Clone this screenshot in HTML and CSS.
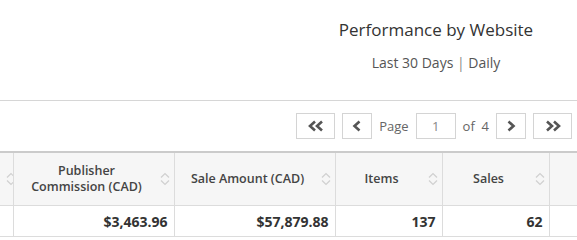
FILE: index.html
```html
<!DOCTYPE html>
<html lang="en">
<head>
  <meta charset="UTF-8">
  <meta name="viewport" content="width=device-width, initial-scale=1">
  <title>Performance by Website</title>
  <link rel="stylesheet" href="styles.css">
</head>
<body>

  <!-- Report title -->
  <div class="report-head">
    <div></div>
    <div class="report-title">
      <h2>Performance by Website</h2>
      <p>Last 30 Days <span class="sep">|</span> Daily</p>
    </div>
  </div>

  <!-- Pager -->
  <div class="pager">
    <button class="pg-btn wide" title="First">
      <svg width="18" height="12" viewBox="0 0 18 12"><polyline points="8,1.5 3,6 8,10.5"/><polyline points="15,1.5 10,6 15,10.5"/></svg>
    </button>
    <button class="pg-btn" title="Previous">
      <svg width="10" height="12" viewBox="0 0 10 12"><polyline points="7.5,1.5 2.5,6 7.5,10.5"/></svg>
    </button>
    <span class="pg-label">Page</span>
    <input class="pg-input" type="text" value="1">
    <span class="pg-label">of&nbsp; 4</span>
    <button class="pg-btn" title="Next">
      <svg width="10" height="12" viewBox="0 0 10 12"><polyline points="2.5,1.5 7.5,6 2.5,10.5"/></svg>
    </button>
    <button class="pg-btn wide" title="Last">
      <svg width="18" height="12" viewBox="0 0 18 12"><polyline points="3,1.5 8,6 3,10.5"/><polyline points="10,1.5 15,6 10,10.5"/></svg>
    </button>
  </div>

  <!-- Report table -->
  <div class="table-wrap">
    <table class="report">
      <colgroup>
        <col style="width:13px">
        <col style="width:161px">
        <col style="width:161px">
        <col style="width:107px">
        <col style="width:107px">
        <col style="width:60px">
      </colgroup>
      <thead>
        <tr>
          <th class="cut"><div class="th-in"><span class="th-label"></span><svg class="sort" width="10" height="14" viewBox="0 0 10 14"><polyline points="1,5.5 5,1.5 9,5.5"/><polyline points="1,8.5 5,12.5 9,8.5"/></svg></div></th>
          <th><div class="th-in"><span class="th-label">Publisher<br>Commission (CAD)</span><svg class="sort" width="10" height="14" viewBox="0 0 10 14"><polyline points="1,5.5 5,1.5 9,5.5"/><polyline points="1,8.5 5,12.5 9,8.5"/></svg></div></th>
          <th><div class="th-in"><span class="th-label">Sale Amount (CAD)</span><svg class="sort" width="10" height="14" viewBox="0 0 10 14"><polyline points="1,5.5 5,1.5 9,5.5"/><polyline points="1,8.5 5,12.5 9,8.5"/></svg></div></th>
          <th><div class="th-in"><span class="th-label">Items</span><svg class="sort" width="10" height="14" viewBox="0 0 10 14"><polyline points="1,5.5 5,1.5 9,5.5"/><polyline points="1,8.5 5,12.5 9,8.5"/></svg></div></th>
          <th><div class="th-in"><span class="th-label">Sales</span><svg class="sort" width="10" height="14" viewBox="0 0 10 14"><polyline points="1,5.5 5,1.5 9,5.5"/><polyline points="1,8.5 5,12.5 9,8.5"/></svg></div></th>
          <th></th>
        </tr>
      </thead>
      <tbody>
        <tr>
          <td></td>
          <td>$3,463.96</td>
          <td>$57,879.88</td>
          <td>137</td>
          <td>62</td>
          <td></td>
        </tr>
      </tbody>
    </table>
  </div>

</body>
</html>
```

FILE: styles.css
```css
body {
  font-family: 'Open Sans', sans-serif;
  margin: 0;
  background: white;
  color: #333;
  overflow: hidden;
}

.report-head {
  display: grid;
  grid-template-columns: 295px 1fr;
  height: 100px;
  border-bottom: 1px solid #d6d6d6;
}

.report-title {
  text-align: center;
  padding-top: 18px;
}

.report-title h2 {
  margin: 0;
  font-size: 17px;
  font-weight: 400;
  color: #333;
  line-height: 24px;
}

.report-title p {
  margin: 11px 0 0;
  font-size: 14px;
  color: #555;
  line-height: 20px;
}

.report-title .sep {
  color: #888;
}

.pager {
  display: flex;
  justify-content: flex-end;
  align-items: center;
  gap: 7px;
  margin-top: 12px;
  padding-right: 5px;
  height: 26px;
}

.pg-btn {
  width: 30px;
  height: 26px;
  padding: 0;
  background: white;
  border: 1px solid #d4d4d4;
  display: flex;
  align-items: center;
  justify-content: center;
}

.pg-btn.wide {
  width: 39px;
}

.pg-btn svg polyline {
  fill: none;
  stroke: #555;
  stroke-width: 2.6;
}

.pg-label {
  font-size: 13px;
  color: #666;
}

.pg-input {
  width: 40px;
  height: 26px;
  box-sizing: border-box;
  border: 1px solid #d4d4d4;
  background: white;
  font-family: 'Open Sans', sans-serif;
  font-size: 13px;
  color: #888;
  text-align: center;
  padding: 0;
}

.table-wrap {
  margin-top: 12px;
  width: 577px;
  overflow: hidden;
}

.report {
  table-layout: fixed;
  width: 609px;
  border-collapse: collapse;
}

.report th {
  background: #f6f6f6;
  border-top: 2px solid #cbcbcb;
  border-right: 1px solid #dcdcdc;
  border-bottom: 1px solid #dcdcdc;
  height: 52px;
  padding: 0 4px 0 6px;
  font-size: 12.5px;
  font-weight: 600;
  color: #444;
  line-height: 16px;
}

.report th.cut {
  padding: 0;
  overflow: hidden;
}

.th-in {
  display: flex;
  align-items: center;
}

.th-label {
  flex: 1;
  text-align: center;
}

.sort {
  flex: none;
  margin-left: 6px;
}

.cut .sort {
  margin-right: 4px;
}

.sort polyline {
  fill: none;
  stroke: #d0d0d0;
  stroke-width: 1.2;
}

.report td {
  height: 30px;
  padding: 0 6px 0 0;
  border-right: 1px solid #dcdcdc;
  border-bottom: 1px solid #dcdcdc;
  text-align: right;
  font-size: 14px;
  font-weight: 700;
  color: #333;
}
```
